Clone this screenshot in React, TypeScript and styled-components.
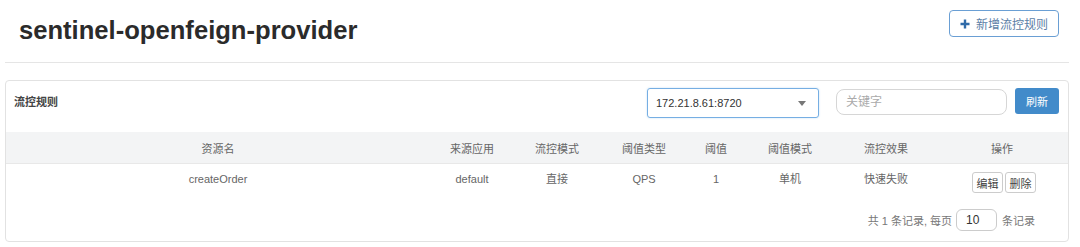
import React from "react";
import styled, { createGlobalStyle } from "styled-components";

const GlobalStyle = createGlobalStyle`
  body {
    margin: 0;
    background: #fff;
    font-family: "Liberation Sans", "Noto Sans CJK SC", sans-serif;
    color: #333;
  }
`;

const Page = styled.div`
  padding: 0 11px 0 5px;
`;

const Header = styled.div`
  height: 62px;
  display: flex;
  align-items: flex-start;
  justify-content: space-between;
  border-bottom: 1px solid #e5e5e5;
  padding: 0 10px 0 14px;
`;

const Title = styled.h1`
  margin: 14px 0 0;
  font-size: 25.6px;
  line-height: 32px;
  font-weight: bold;
  color: #2b2b2b;
`;

const AddButton = styled.button`
  margin-top: 10px;
  height: 27px;
  width: 110px;
  box-sizing: border-box;
  display: flex;
  align-items: center;
  justify-content: center;
  gap: 6px;
  background: #fff;
  border: 1px solid #6a9fd4;
  border-radius: 4px;
  font-family: inherit;
  font-size: 12px;
  color: #5b7ea6;
  padding: 0;
`;

const Panel = styled.div`
  margin-top: 17px;
  border: 1px solid #e2e2e2;
  border-radius: 4px;
  height: 162px;
  box-sizing: border-box;
  display: flex;
  flex-direction: column;
`;

const Toolbar = styled.div`
  height: 51px;
  box-sizing: border-box;
  display: flex;
  align-items: flex-start;
  padding: 7px 9px 0 8px;
`;

const PanelTitle = styled.div`
  flex: 1;
  margin-top: 4px;
  font-size: 11px;
  line-height: 20px;
  font-weight: bold;
  color: #444;
`;

const Select = styled.div`
  width: 172px;
  height: 30px;
  box-sizing: border-box;
  border: 1px solid #76aee3;
  border-radius: 3px;
  box-shadow: 0 0 2px rgba(102, 175, 233, 0.4);
  display: flex;
  align-items: center;
  justify-content: space-between;
  padding: 0 12px 0 8px;
  font-size: 11px;
  color: #333;
`;

const Caret = styled.span`
  width: 0;
  height: 0;
  border-left: 4px solid transparent;
  border-right: 4px solid transparent;
  border-top: 5px solid #777;
`;

const SearchInput = styled.input`
  margin: 1px 0 0 17px;
  width: 171px;
  height: 26px;
  box-sizing: border-box;
  border: 1px solid #d6d6d6;
  border-radius: 8px;
  padding: 0 9px;
  font-family: inherit;
  font-size: 12px;
  outline: none;
  &::placeholder {
    color: #aaa;
  }
`;

const RefreshButton = styled.button`
  margin-left: 8px;
  width: 44px;
  height: 26px;
  border: none;
  border-radius: 3px;
  background: #428bca;
  color: #fff;
  font-family: inherit;
  font-size: 11px;
  padding: 0;
`;

const Table = styled.table`
  width: 100%;
  border-collapse: collapse;
  table-layout: fixed;
  font-size: 11px;
`;

const Th = styled.th<{ $w: number }>`
  width: ${(p) => p.$w}px;
  height: 31px;
  padding: 0;
  background: #f3f4f5;
  border-bottom: 1px solid #e8e8e8;
  font-weight: normal;
  color: #666;
  text-align: center;
`;

const Td = styled.td<{ $top?: number }>`
  height: 37px;
  box-sizing: border-box;
  padding: ${(p) => p.$top ?? 7}px 0 0;
  vertical-align: top;
  text-align: center;
  color: #666;
  line-height: 16px;
`;

const Actions = styled.div`
  display: flex;
  justify-content: center;
  gap: 2px;
  padding-left: 4px;
`;

const SmallButton = styled.button`
  height: 21px;
  width: 31px;
  padding: 0;
  border: 1px solid #ccc;
  border-radius: 3px;
  background: #fff;
  font-family: inherit;
  font-size: 11px;
  color: #444;
`;

const Pager = styled.div`
  flex: 1;
  display: flex;
  align-items: center;
  justify-content: flex-end;
  padding: 0 33px 2px 0;
  font-size: 11px;
  color: #777;
`;

const PageSize = styled.input`
  margin: 0 5px 0 4px;
  width: 41px;
  height: 22px;
  box-sizing: border-box;
  border: 1px solid #ccc;
  border-radius: 6px;
  padding: 0 9px;
  font-family: inherit;
  font-size: 12px;
  color: #333;
  outline: none;
`;

const columns = [
  { title: "资源名", w: 424 },
  { title: "来源应用", w: 84 },
  { title: "流控模式", w: 86 },
  { title: "阈值类型", w: 88 },
  { title: "阈值", w: 56 },
  { title: "阈值模式", w: 92 },
  { title: "流控效果", w: 100 },
  { title: "操作", w: 132 },
];

const rows = [["createOrder", "default", "直接", "QPS", "1", "单机", "快速失败"]];

const PlusIcon = () => (
  <svg width="10" height="10" viewBox="0 0 10 10">
    <path d="M5 0.5v9M0.5 5h9" stroke="#2f6aa8" strokeWidth="2.4" />
  </svg>
);

const App = () => {
  return (
    <Page>
      <GlobalStyle />
      <Header>
        <Title>sentinel-openfeign-provider</Title>
        <AddButton>
          <PlusIcon />
          新增流控规则
        </AddButton>
      </Header>
      <Panel>
        <Toolbar>
          <PanelTitle>流控规则</PanelTitle>
          <Select>
            <span>172.21.8.61:8720</span>
            <Caret />
          </Select>
          <SearchInput placeholder="关键字" />
          <RefreshButton>刷新</RefreshButton>
        </Toolbar>
        <Table>
          <thead>
            <tr>
              {columns.map((c) => (
                <Th key={c.title} $w={c.w}>
                  {c.title}
                </Th>
              ))}
            </tr>
          </thead>
          <tbody>
            {rows.map((r) => (
              <tr key={r[0]}>
                {r.map((v, i) => (
                  <Td key={i}>{v}</Td>
                ))}
                <Td $top={8}>
                  <Actions>
                    <SmallButton>编辑</SmallButton>
                    <SmallButton>删除</SmallButton>
                  </Actions>
                </Td>
              </tr>
            ))}
          </tbody>
        </Table>
        <Pager>
          共 1 条记录, 每页
          <PageSize defaultValue="10" />
          条记录
        </Pager>
      </Panel>
    </Page>
  );
};

export default App;
